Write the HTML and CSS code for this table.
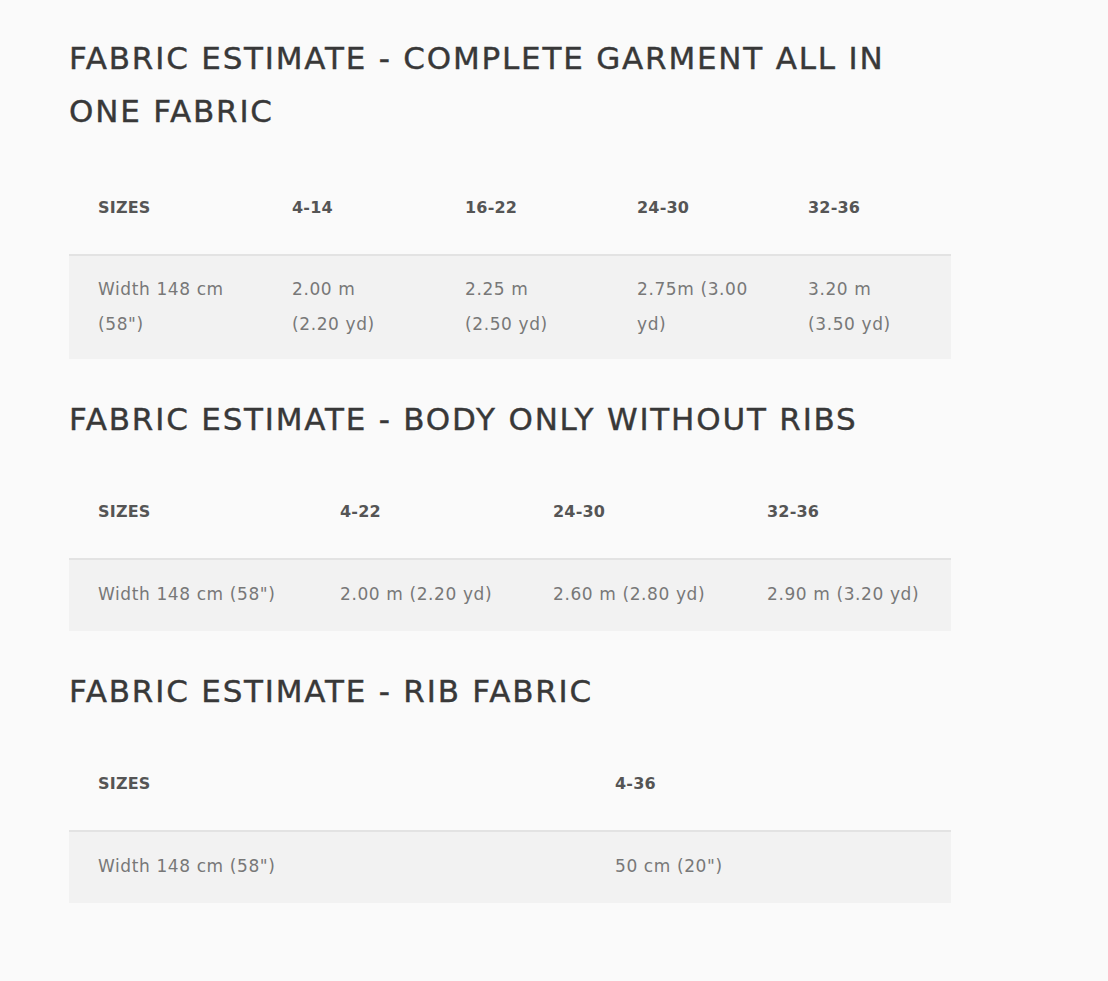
FILE: index.html
```html
<!DOCTYPE html>
<html lang="en">
<head>
<meta charset="utf-8">
<title>Fabric estimate</title>
<link rel="stylesheet" href="styles.css">
</head>
<body>
<main class="page">
  <section class="block">
    <h2 class="title">FABRIC ESTIMATE - COMPLETE GARMENT ALL IN ONE FABRIC</h2>
    <table class="sizes t5">
      <colgroup><col class="c1"><col class="c2"><col class="c3"><col class="c4"><col class="c5"></colgroup>
      <thead>
        <tr><th>SIZES</th><th>4-14</th><th>16-22</th><th>24-30</th><th>32-36</th></tr>
      </thead>
      <tbody>
        <tr><td>Width 148 cm (58")</td><td>2.00 m (2.20 yd)</td><td>2.25 m (2.50 yd)</td><td>2.75m (3.00 yd)</td><td>3.20 m (3.50 yd)</td></tr>
      </tbody>
    </table>
  </section>
  <section class="block">
    <h2 class="title">FABRIC ESTIMATE - BODY ONLY WITHOUT RIBS</h2>
    <table class="sizes t4">
      <colgroup><col class="c1"><col class="c2"><col class="c3"><col class="c4"></colgroup>
      <thead>
        <tr><th>SIZES</th><th>4-22</th><th>24-30</th><th>32-36</th></tr>
      </thead>
      <tbody>
        <tr><td>Width 148 cm (58")</td><td>2.00 m (2.20 yd)</td><td>2.60 m (2.80 yd)</td><td>2.90 m (3.20 yd)</td></tr>
      </tbody>
    </table>
  </section>
  <section class="block">
    <h2 class="title">FABRIC ESTIMATE - RIB FABRIC</h2>
    <table class="sizes t2">
      <colgroup><col class="c1"><col class="c2"></colgroup>
      <thead>
        <tr><th>SIZES</th><th>4-36</th></tr>
      </thead>
      <tbody>
        <tr><td>Width 148 cm (58")</td><td>50 cm (20")</td></tr>
      </tbody>
    </table>
  </section>
</main>
</body>
</html>
```
FILE: styles.css
```css
html, body {
  margin: 0;
  padding: 0;
  background: #fafafa;
}
body {
  font-family: "DejaVu Sans", "Liberation Sans", sans-serif;
  color: #333;
}
.page {
  padding: 32px 0 40px 69px;
  width: 882px;
}
.title {
  margin: 0 0 18px 0;
  font-size: 31px;
  line-height: 53px;
  letter-spacing: 1.8px;
  font-weight: normal;
  color: #383838;
  -webkit-text-stroke: 0.4px #383838;
  width: 860px;
}
.block:first-child .title {
  margin-bottom: 22px;
}
.block + .block .title {
  margin-top: 34px;
}
.sizes {
  width: 882px;
  border-collapse: collapse;
  table-layout: fixed;
}
.sizes th {
  text-align: left;
  font-size: 16px;
  font-weight: bold;
  letter-spacing: 0.2px;
  color: #555;
  line-height: 35px;
  padding: 30px 29px 29px;
  border-bottom: 2px solid #e3e3e3;
}
.sizes td {
  background: #f2f2f2;
  font-size: 17px;
  letter-spacing: 0.6px;
  color: #787878;
  line-height: 35px;
  padding: 17px 29px 19px 29px;
  vertical-align: top;
}
.t5 td {
  padding-top: 16px;
  padding-bottom: 17px;
}
.t5 .c1 { width: 194px; }
.t5 .c2 { width: 173px; }
.t5 .c3 { width: 172px; }
.t5 .c4 { width: 171px; }
.t5 .c5 { width: 172px; }
.t4 .c1 { width: 242px; }
.t4 .c2 { width: 213px; }
.t4 .c3 { width: 214px; }
.t4 .c4 { width: 213px; }
.t2 .c1 { width: 517px; }
.t2 .c2 { width: 365px; }
```
